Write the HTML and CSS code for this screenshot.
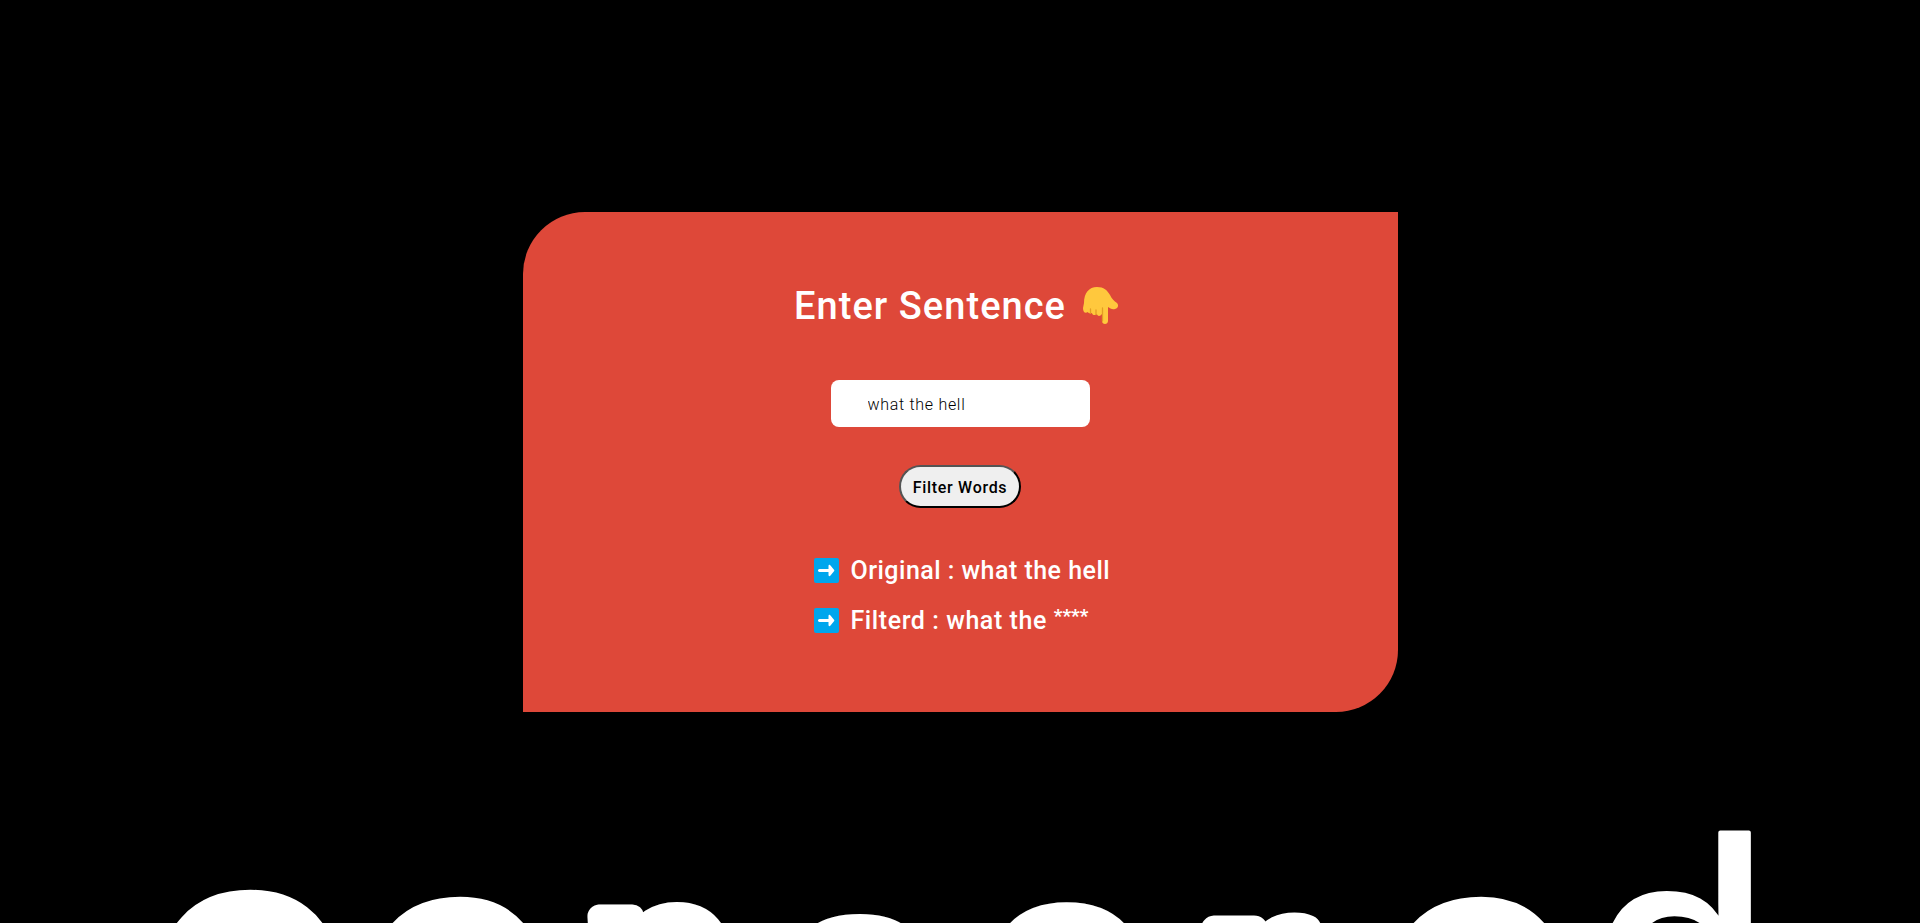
FILE: index.html
```html
<!DOCTYPE html>
<html lang="en">
<head>
<meta charset="utf-8">
<title>Word Filter</title>
<link rel="stylesheet" href="styles.css">
</head>
<body>
<svg class="backdrop" viewBox="0 0 1920 923" aria-hidden="true">
  <text class="scrawl" y="1074"><tspan x="157">c</tspan><tspan x="368" y="1081">e</tspan><tspan x="583" y="1049" class="narrow">n</tspan><tspan x="790" y="1062" class="narrow">s</tspan><tspan x="990" y="1050" class="narrow">o</tspan><tspan x="1195" y="1088" class="wide">r</tspan><tspan x="1389" y="1081">e</tspan><tspan x="1590" y="1068" class="thin">d</tspan></text>
</svg>
<main class="card">
  <h1 class="title"><span class="title-text">Enter Sentence</span>
    <svg class="hand" viewBox="0 0 36 38"><path fill="#ffc83d" d="M1 17C1 7 6 1 14 1c7 0 10 3 13 8 2 4 4 6 7 8 2 2 1 6-2 6-3 1-5-1-7-2v14c0 4-6 4-6 0v-7c-2 3-5 2-5 0-2 2-5 1-5-1-2 1-4 0-4-1-3 2-5 0-5-4z"/><path fill="none" stroke="#e39d24" stroke-width="1.300" stroke-linecap="round" d="M7.500 23v4M13 24v4.500M19.500 22v13"/></svg>
  </h1>
  <input class="field" type="text" value="what the hell">
  <button class="filter" type="button">Filter Words</button>
  <div class="results">
    <p class="row"><svg class="arrow" viewBox="0 0 25 25"><rect width="25" height="25" rx="2" fill="#00a6ed"/><path fill="#fff" d="M5.500 11h9V8.300c0-1.600 1.100-1.800 2-.9l3.500 4.300q.8.800 0 1.600l-3.500 4.300c-.9.900-2 .7-2-.9V14h-9c-2 0-2-3 0-3z"/></svg><span class="original">Original : what the hell</span></p>
    <p class="row"><svg class="arrow" viewBox="0 0 25 25"><rect width="25" height="25" rx="2" fill="#00a6ed"/><path fill="#fff" d="M5.500 11h9V8.300c0-1.600 1.100-1.800 2-.9l3.500 4.300q.8.800 0 1.600l-3.500 4.300c-.9.900-2 .7-2-.9V14h-9c-2 0-2-3 0-3z"/></svg><span class="filtered">Filterd : what the <span class="stars">****</span></span></p>
  </div>
</main>
</body>
</html>
```
FILE: styles.css
```css
* { box-sizing: border-box; }
body {
  margin: 0;
  height: 923px;
  overflow: hidden;
  background: #000;
  display: flex;
  justify-content: center;
  align-items: center;
  font-family: Roboto, "Liberation Sans", sans-serif;
}
.backdrop { position: absolute; inset: 0; width: 1920px; height: 923px; }
.scrawl {
  font-family: "Liberation Sans", sans-serif;
  font-weight: 700;
  font-size: 320px;
  fill: #fff;
  stroke: #fff;
  stroke-width: 24px;
  stroke-linejoin: round;
}
.narrow { font-size: 250px; }
.wide { font-size: 300px; stroke-width: 28px; }
.thin { font-weight: 400; font-size: 325px; stroke-width: 4px; }
.card {
  position: relative;
  width: 875px;
  height: 500px;
  padding-top: 71px;
  background: #de4839;
  border-radius: 62px 0;
  color: #fff;
  display: flex;
  flex-direction: column;
  align-items: center;
}
.title {
  margin: 0 7px 0 0;
  height: 46px;
  display: flex;
  align-items: center;
  gap: 17px;
  font-size: 38px;
  font-weight: 500;
  letter-spacing: 1.05px;
  white-space: nowrap;
}
.hand { width: 36px; height: 38px; margin-bottom: 2px; }
.field {
  margin-top: 51px;
  width: 259px;
  height: 47px;
  padding: 2px 37px 0;
  border: 0;
  border-radius: 8px;
  background: #fff;
  color: #000;
  font: 300 16px Roboto, sans-serif;
  letter-spacing: .7px;
}
.filter {
  margin-top: 38px;
  width: 122px;
  height: 43px;
  padding: 2px 0 0;
  border: 2px outset #000;
  border-radius: 22px;
  background: #efefef;
  color: #000;
  font: 500 16px Roboto, sans-serif;
  letter-spacing: .7px;
  white-space: nowrap;
}
.results { margin-top: 38px; width: 293px; display: flex; flex-direction: column; }
.row {
  margin: 0;
  height: 50px;
  display: flex;
  align-items: center;
  gap: 12px;
  font-size: 25px;
  font-weight: 500;
  white-space: nowrap;
}
.arrow { width: 25px; height: 25px; flex: none; }
.original { letter-spacing: .48px; }
.filtered { letter-spacing: .58px; }
.stars { font-size: 19px; font-weight: 700; letter-spacing: 0; line-height: 0; vertical-align: 7px; }
```
